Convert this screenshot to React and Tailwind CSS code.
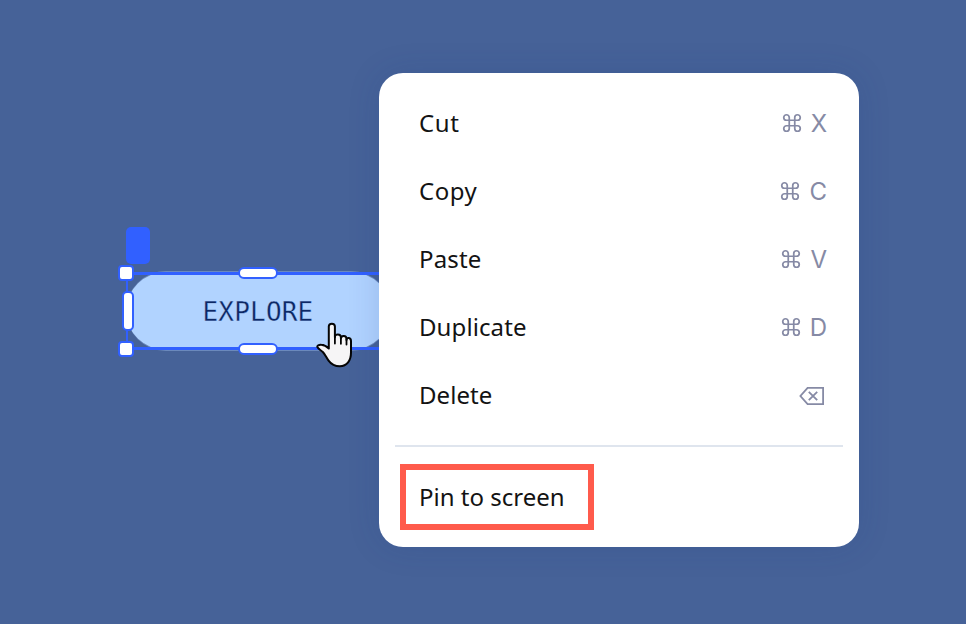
import { Command } from 'lucide-react'

const items = [
  { label: 'Cut', shortcut: 'X', spacing: 'tracking-[0.6px]' },
  { label: 'Copy', shortcut: 'C', spacing: 'tracking-[0.5px]' },
  { label: 'Paste', shortcut: 'V', spacing: 'tracking-[0.15px]' },
  { label: 'Duplicate', shortcut: 'D', spacing: 'tracking-[0.1px]' },
  { label: 'Delete', shortcut: null, spacing: 'tracking-[0.05px]' },
]

function DeleteKeyIcon() {
  return (
    <svg width="26" height="20" viewBox="0 0 26 20" fill="none" stroke="currentColor" strokeWidth="1.8">
      <path d="M8.6 1.8H24.1V18.2H8.6L1.4 10Z" />
      <path d="M9.8 5.8L18.2 14.2M18.2 5.8L9.8 14.2" />
    </svg>
  )
}

function HandCursor() {
  return (
    <svg className="absolute left-[316px] top-[321px]" width="38" height="48" viewBox="6 6 38 48">
      <path
        d="M18.8 33.5V11.6C18.8 7.7 24.9 7.7 24.9 11.6V22.2C24.9 18.4 30.9 18.6 30.9 22.3V23.4C31.1 19.9 36.5 20.1 36.5 23.8V25C36.8 21.8 41 22.3 41 26V37.6C41 45.6 37 51.2 29.8 51.2C24.7 51.2 21.7 49.8 18.8 45.8C16 42 15.5 39.8 12.8 37C10.8 34.9 8.8 34.5 7.5 32.3C6.7 30.6 9 29.6 11.3 29.8C14.6 30 16.8 31.5 18.8 33.5Z"
        fill="#f6f5f6"
        stroke="#050505"
        strokeWidth="2"
        strokeLinejoin="round"
      />
      <path d="M24.9 21V28.5M30.9 22V28.8M36.5 24V29.5" fill="none" stroke="#050505" strokeWidth="1.8" strokeLinecap="round" />
    </svg>
  )
}

// Button on the editor canvas with its selection frame and drag handles
function SelectedButton() {
  return (
    <>
      <div className="absolute left-[126px] top-[227px] h-[37px] w-6 rounded-[5px] bg-[#3160ff]" />
      <div className="absolute left-[126px] top-[271px] flex h-20 w-[265px] items-center justify-center rounded-full border-y border-[#b1d3ff]/35 bg-[#b1d3ff] bg-clip-padding pr-px pt-[3px] font-['DejaVu_Sans_Mono','Liberation_Mono',monospace] text-[26px] tracking-[0.2px] text-[#0d2864] [-webkit-text-stroke:0.3px_#b1d3ff]">
        EXPLORE
      </div>
      <div className="absolute left-[126px] top-[272px] h-[78px] w-[264px] border-y-3 border-l-2 border-[#3160ff]" />
      <div className="absolute left-[118px] top-[265px] flex h-[92px] w-4 flex-col items-end justify-between">
        <div className="size-4 rounded-[4px] border-2 border-[#3160ff] bg-white" />
        <div className="h-10 w-3 rounded-[5px] border-2 border-[#3160ff] bg-white" />
        <div className="size-4 rounded-[4px] border-2 border-[#3160ff] bg-white" />
      </div>
      <div className="absolute left-[238px] top-[267px] flex h-[88px] flex-col justify-between">
        <div className="h-3 w-10 rounded-[6px] border-2 border-[#3160ff] bg-white" />
        <div className="h-3 w-10 rounded-[6px] border-2 border-[#3160ff] bg-white" />
      </div>
      <HandCursor />
    </>
  )
}

function MenuRow({ item }) {
  return (
    <div className="flex h-[68px] items-center justify-between pl-10 pr-8">
      <span className={item.spacing}>{item.label}</span>
      {item.shortcut ? (
        <span className="flex items-center gap-2 pt-px font-['Inter','Liberation_Sans',sans-serif] text-[#868aa5]">
          <Command className="mb-px" size={22} strokeWidth={1.9} />
          <span>{item.shortcut}</span>
        </span>
      ) : (
        <span className="pr-0.5 pt-0.5 text-[#868aa5]">
          <DeleteKeyIcon />
        </span>
      )}
    </div>
  )
}

export default function App() {
  return (
    <div className="relative h-[624px] w-[966px] overflow-hidden bg-[#466298]">
      <SelectedButton />

      <div className="absolute left-[379px] top-[73px] flex h-[474px] w-[480px] flex-col rounded-3xl bg-white pb-[17px] pt-4 font-['Noto_Sans','Open_Sans',sans-serif] text-2xl text-[#131313] shadow-[0_0_32px_rgba(22,55,130,0.16)]">
        {items.map((item) => (
          <MenuRow key={item.label} item={item} />
        ))}
        <div className="mx-4 mt-4 h-0.5 shrink-0 bg-[#dfe5ee]" />
        <div className="ml-[21px] mt-[17px] flex h-[66px] w-[194px] shrink-0 items-center border-6 border-[#ff5b4c] pl-[13px]">
          Pin to screen
        </div>
      </div>
    </div>
  )
}
